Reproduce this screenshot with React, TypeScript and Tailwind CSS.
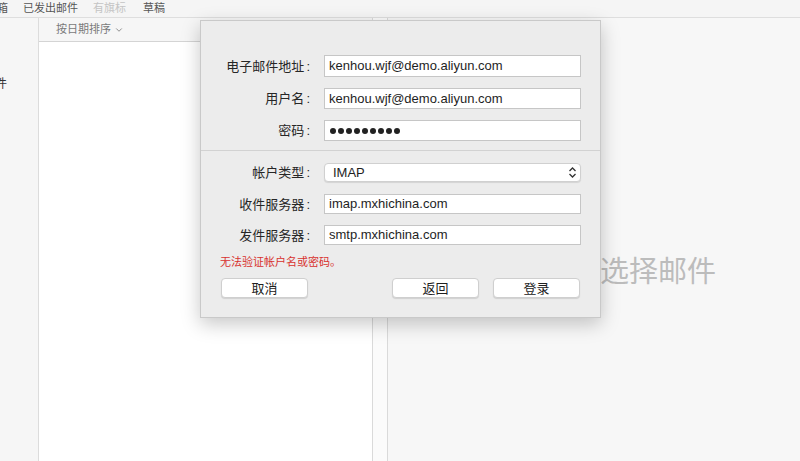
import { ChevronDown } from 'lucide-react';

const font = { fontFamily: '"Liberation Sans", "Noto Sans CJK SC", sans-serif' };

function Field({ label, children }: { label: string; children: React.ReactNode }) {
  return (
    <div className="flex items-center">
      <div className="w-[109px] text-right text-[13px] leading-none text-[#262626]">
        {label}
        <span className="ml-[2px]">:</span>
      </div>
      <div className="ml-[14px] w-[257px]">{children}</div>
    </div>
  );
}

function TextBox({ value, h = 'h-[21px]' }: { value: string; h?: string }) {
  return (
    <div
      className={`${h} flex items-center bg-white border border-[#c6c6c6] pl-[4px] text-[13px] text-[#1e1e1e]`}
    >
      {value}
    </div>
  );
}

function Button({ label, className }: { label: string; className?: string }) {
  return (
    <button
      className={`h-[20px] w-[87px] rounded-[4px] bg-white border border-[#cfcfcf] shadow-[0_1px_1px_rgba(0,0,0,0.12)] text-[13px] leading-none text-[#202020] ${className ?? ''}`}
    >
      {label}
    </button>
  );
}

export default function App() {
  return (
    <div className="relative w-[800px] h-[461px] overflow-hidden flex flex-col bg-[#f6f6f6]" style={font}>
      {/* toolbar */}
      <div className="h-[18px] flex items-center bg-[#f5f5f5] border-b border-[#dedede] text-[11px] text-[#555] overflow-hidden whitespace-nowrap">
        <span className="ml-[-25px]">收件箱</span>
        <span className="ml-[15px]">已发出邮件</span>
        <span className="ml-[15px] text-[#c4c4c4]">有旗标</span>
        <span className="ml-[17px]">草稿</span>
      </div>

      <div className="flex flex-1 min-h-0">
        {/* sidebar */}
        <div className="w-[39px] bg-[#f6f6f6] border-r border-[#dcdcdc] overflow-hidden whitespace-nowrap">
          <div className="mt-[57px] ml-[-17px] text-[12px] text-[#333]">邮件</div>
        </div>

        {/* message list */}
        <div className="w-[334px] bg-white border-r border-[#dadada] flex flex-col">
          <div className="h-[24px] flex items-center pl-[17px] bg-[#f6f6f6] border-b border-[#d4d4d4] text-[11px] text-[#7a7a7a]">
            按日期排序
            <ChevronDown className="ml-[3px] w-[10px] h-[10px]" strokeWidth={2} />
          </div>
          <div className="flex-1 bg-white" />
        </div>

        <div className="w-[14px] bg-[#fbfbfb]" />

        {/* preview */}
        <div className="flex-1 bg-[#f7f7f7] border-l border-[#dadada] pt-[238px] pl-[183px] whitespace-nowrap">
          <div className="text-[29px] leading-[32px] text-[#bcbcbc]">未选择邮件</div>
        </div>
      </div>

      {/* sheet */}
      <div className="absolute left-[200px] top-[20px] w-[401px] h-[298px] bg-[#ececec] border border-[#c9c9c9] shadow-[0_6px_18px_rgba(0,0,0,0.22)] pt-[34px]">
        <div className="flex flex-col gap-[11px]">
          <Field label="电子邮件地址">
            <TextBox value="kenhou.wjf@demo.aliyun.com" h="h-[22px]" />
          </Field>
          <Field label="用户名">
            <TextBox value="kenhou.wjf@demo.aliyun.com" />
          </Field>
          <Field label="密码">
            <div className="h-[21px] flex items-center gap-[2px] bg-white border border-[#c6c6c6] pl-[5px]">
              {Array.from({ length: 9 }).map((_, i) => (
                <span key={i} className="w-[6px] h-[6px] rounded-full bg-[#222]" />
              ))}
            </div>
          </Field>
        </div>

        <div className="mt-[9px] border-t border-[#d2d2d2]" />

        <div className="pt-[12px] flex flex-col">
          <Field label="帐户类型">
            <div className="h-[19px] flex items-center justify-between rounded-[4px] bg-white border border-[#d0d0d0] shadow-[0_1px_1px_rgba(0,0,0,0.1)] pl-[8px] pr-[3px] text-[13px] text-[#1e1e1e]">
              IMAP
              <svg width="9" height="13" viewBox="0 0 9 13" fill="none" stroke="#333" strokeWidth="1.3">
                <path d="M1.5 5 L4.5 2 L7.5 5" />
                <path d="M1.5 8 L4.5 11 L7.5 8" />
              </svg>
            </div>
          </Field>
          <div className="mt-[12px]">
            <Field label="收件服务器">
              <TextBox value="imap.mxhichina.com" h="h-[20px]" />
            </Field>
          </div>
          <div className="mt-[11px]">
            <Field label="发件服务器">
              <TextBox value="smtp.mxhichina.com" h="h-[20px]" />
            </Field>
          </div>
        </div>

        <div className="mt-[10px] ml-[19px] text-[11px] leading-[14px] text-[#d8322f]">无法验证帐户名或密码。</div>

        <div className="mt-[9px] flex items-center pl-[20px]">
          <Button label="取消" />
          <Button label="返回" className="ml-[84px]" />
          <Button label="登录" className="ml-[14px]" />
        </div>
      </div>
    </div>
  );
}
